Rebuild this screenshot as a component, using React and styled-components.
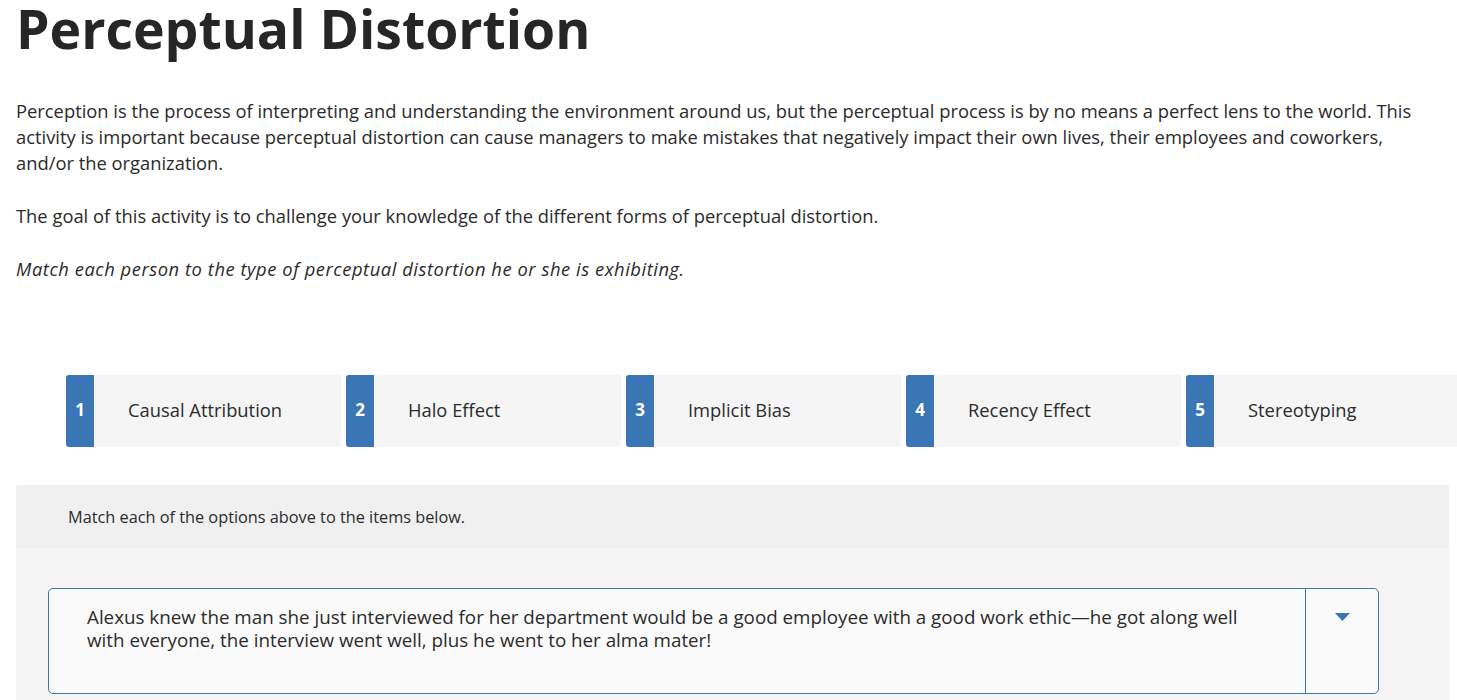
import React from 'react';
import styled, { createGlobalStyle } from 'styled-components';

const GlobalStyle = createGlobalStyle`
  html, body {
    margin: 0;
    padding: 0;
    background: #fff;
    overflow: hidden;
  }
  body {
    font-family: "Open Sans", Lato, Arial, sans-serif;
    color: #2b2b2b;
  }
`;

const Page = styled.div`
  width: 1457px;
  padding: 0 0 0 16px;
  box-sizing: border-box;
`;

const Title = styled.h1`
  margin: 0;
  font-size: 53.5px;
  line-height: 58px;
  font-weight: 700;
  color: #262626;
`;

const Intro = styled.div`
  padding-right: 16px;
  margin-top: 40px;
`;

const Para = styled.p`
  margin: 0 0 27px;
  font-size: 18.35px;
  line-height: 26px;
  color: #2b2b2b;
  font-style: ${p => (p.italic ? 'italic' : 'normal')};
  letter-spacing: ${p => (p.italic ? '0.55px' : 'normal')};
`;

const Options = styled.div`
  display: flex;
  gap: 5px;
  margin: 93px 0 0 50px;
  width: max-content;
`;

const Option = styled.div`
  display: flex;
  width: 275px;
  height: 72px;
  flex-shrink: 0;
  background: #f5f5f5;
  border-radius: 3px;
  overflow: hidden;
`;

const Badge = styled.div`
  width: 28px;
  background: #3a75b6;
  color: #fff;
  font-weight: 700;
  font-size: 17px;
  display: flex;
  align-items: center;
  justify-content: center;
  padding-bottom: 3px;
  box-sizing: border-box;
`;

const OptionLabel = styled.div`
  display: flex;
  align-items: center;
  padding: 0 0 3px 34px;
  font-size: 18.35px;
  color: #2b2b2b;
`;

const Panel = styled.div`
  margin-top: 38px;
  width: 1433px;
  background: #f5f5f5;
  border-radius: 3px 3px 0 0;
`;

const PanelHeader = styled.div`
  height: 63px;
  background: #f0f0f0;
  display: flex;
  align-items: center;
  padding-left: 52px;
  font-size: 16.3px;
  color: #2b2b2b;
  border-radius: 3px 3px 0 0;
`;

const PanelBody = styled.div`
  padding: 40px 70px 20px 32px;
`;

const Select = styled.div`
  display: flex;
  min-height: 106px;
  box-sizing: border-box;
  border: 1px solid #3a75b6;
  border-radius: 5px;
  background: #fafafa;
`;

const SelectText = styled.div`
  flex: 1;
  padding: 17px 40px 0 38px;
  font-size: 18.8px;
  line-height: 23px;
  color: #2b2b2b;
`;

const SelectToggle = styled.div`
  width: 73px;
  border-left: 1px solid #3a75b6;
  display: flex;
  justify-content: center;
  padding-top: 24px;
  box-sizing: border-box;
`;

const Caret = () => (
  <svg width="15" height="8" viewBox="0 0 15 8">
    <path d="M0 0 H15 L7.5 8 Z" fill="#3a75b6" />
  </svg>
);

const options = [
  'Causal Attribution',
  'Halo Effect',
  'Implicit Bias',
  'Recency Effect',
  'Stereotyping',
];

export default function App() {
  return (
    <>
      <GlobalStyle />
      <Page>
        <Title>Perceptual Distortion</Title>
        <Intro>
          <Para>
            Perception is the process of interpreting and understanding the environment around us, but the
            perceptual process is by no means a perfect lens to the world. This activity is important because
            perceptual distortion can cause managers to make mistakes that negatively impact their own lives,
            their employees and coworkers, and/or the organization.
          </Para>
          <Para>
            The goal of this activity is to challenge your knowledge of the different forms of perceptual
            distortion.
          </Para>
          <Para italic>Match each person to the type of perceptual distortion he or she is exhibiting.</Para>
        </Intro>
        <Options>
          {options.map((label, i) => (
            <Option key={label}>
              <Badge>{i + 1}</Badge>
              <OptionLabel>{label}</OptionLabel>
            </Option>
          ))}
        </Options>
        <Panel>
          <PanelHeader>Match each of the options above to the items below.</PanelHeader>
          <PanelBody>
            <Select>
              <SelectText>
                Alexus knew the man she just interviewed for her department would be a good employee with a good
                work ethic—he got along well with everyone, the interview went well, plus he went to her alma
                mater!
              </SelectText>
              <SelectToggle>
                <Caret />
              </SelectToggle>
            </Select>
          </PanelBody>
        </Panel>
      </Page>
    </>
  );
}
